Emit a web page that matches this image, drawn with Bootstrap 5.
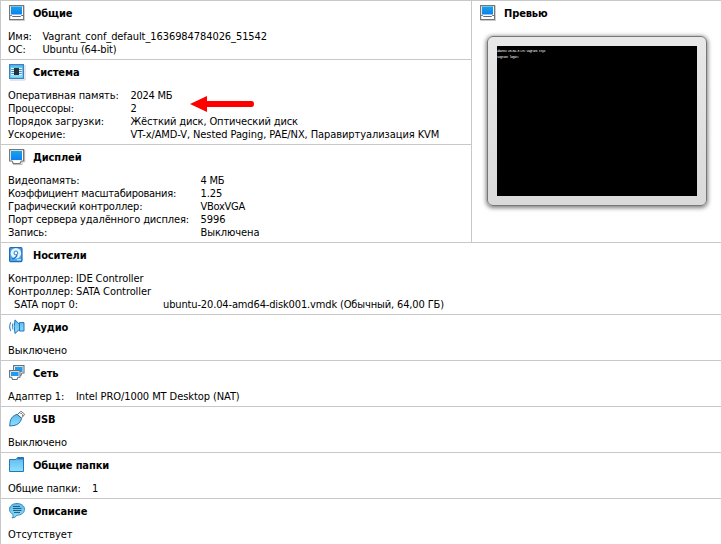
<!DOCTYPE html>
<html lang="ru">
<head>
<meta charset="utf-8">
<title>Сведения о машине</title>
<link href="https://cdn.jsdelivr.net/npm/bootstrap@5.3.0/dist/css/bootstrap.min.css" rel="stylesheet">
<style>
body{font:11px/13px "DejaVu Sans Condensed",Tahoma,sans-serif;letter-spacing:-.08px;color:#000;background:#fff;overflow:hidden}
.page{width:721px;height:544px;border-left:1px solid #c8c8c8}
.sect{border-top:1px solid #c8c8c8;padding:0 0 3px 7px}
.sect-head{height:29px;padding:4px 0 0 1px;gap:8px}
.sect-head h2{font-size:11px;line-height:18px;font-weight:700;letter-spacing:-.12px;margin:0}
.sect-head svg{width:16px;height:16px;flex:none;overflow:visible}
.line{white-space:pre;height:13px}
.k-gen{width:34.5px}.k-sys{width:122.5px}.k-disp{width:192.5px}.k-ctl{width:68px}.k-port{width:155px}.k-fold{width:84px}
.t1{letter-spacing:-.14px}.t2{letter-spacing:-.26px}
.main-col{width:470px}
.preview{border-left:1px solid #c8c8c8;border-top:1px solid #c8c8c8;padding-left:7px}
.preview .sect-head{padding-left:1px}
.bezel{width:220px;height:170px;margin:6px 0 0 8px;padding:9px;border:1px solid #777;border-radius:6px;background:linear-gradient(#e8e8e8,#dadada);box-shadow:0 1px 4px 1px rgba(0,0,0,.5)}
.screen{width:200px;height:150px;background:#000;color:#eee;font:3.5px/6px "Liberation Mono",monospace;letter-spacing:-.55px;padding-top:2px;white-space:pre}
.arrow{left:188px;top:95px;width:66px;height:18px}
</style>
<script src="https://cdn.jsdelivr.net/npm/bootstrap@5.3.0/dist/js/bootstrap.bundle.min.js"></script>
</head>
<body>
<svg width="0" height="0" class="position-absolute" aria-hidden="true">
<defs>
<linearGradient id="scr" x2="0" y2="1"><stop stop-color="#18a4e8"/><stop offset="1" stop-color="#0b80f5"/></linearGradient>
<linearGradient id="sky" x2="0" y2="1"><stop stop-color="#5eb8ee"/><stop offset="1" stop-color="#8ce2ff"/></linearGradient>
<symbol id="machine" viewBox="0 0 16 16"><path d="M1 16H16V1" fill="none" stroke="#ccc"/><path d="M.6.6H14.6V14.6H.6Z" fill="#fff" stroke="#747678" stroke-width="1.2"/><path d="M2 1.5H13V9.5H2Z" fill="url(#scr)"/><path d="M1.2 10.5H2.5L3.5 11.5H11.5L12.5 10.5H14" fill="none" stroke="#686868"/></symbol>
</defs>
</svg>
<div class="page position-relative">
<div class="d-flex">
<div class="main-col">
<section class="sect">
<div class="sect-head d-flex"><svg><use href="#machine"/></svg><h2>Общие</h2></div>
<div class="line d-flex"><span class="k-gen">Имя:</span><span>Vagrant_conf_default_1636984784026_51542</span></div>
<div class="line d-flex"><span class="k-gen">ОС:</span><span class="t1">Ubuntu (64-bit)</span></div>
</section>
<section class="sect">
<div class="sect-head d-flex"><svg viewBox="0 0 16 16"><path d="M1 16H16V1" fill="none" stroke="#ccd"/><path d="M.6.6H14.4V14.4H.6Z" fill="url(#sky)" stroke="#3a84bd" stroke-width="1.2"/><path d="M2 4.5H13M2 6.5H13M2 8.5H13M2 10.5H13" stroke="#e6f7ff"/><path d="M2.5 5.5H12.5M2.5 7.5H12.5M2.5 9.5H12.5" stroke="#3f6f96" stroke-width=".7"/><path d="M5 4H10V11H5Z" fill="#26313e"/></svg><h2>Система</h2></div>
<div class="line d-flex"><span class="k-sys t1">Оперативная память:</span><span class="t2">2024 МБ</span></div>
<div class="line d-flex"><span class="k-sys">Процессоры:</span><span>2</span></div>
<div class="line d-flex"><span class="k-sys">Порядок загрузки:</span><span class="t1">Жёсткий диск, Оптический диск</span></div>
<div class="line d-flex"><span class="k-sys">Ускорение:</span><span>VT-x/AMD-V, Nested Paging, PAE/NX, Паравиртуализация KVM</span></div>
</section>
<section class="sect">
<div class="sect-head d-flex"><svg viewBox="0 0 16 16"><path d="M15.7 1V12.8H13V15.6H4" fill="none" stroke="#bbb"/><path d="M.6.6H14.6V12H12.2L11 14.5H4.2L3 12H.6Z" fill="#fff" stroke="#747678" stroke-width="1.2"/><path d="M2 2H13V11H2Z" fill="url(#scr)"/></svg><h2>Дисплей</h2></div>
<div class="line d-flex"><span class="k-disp t1">Видеопамять:</span><span class="t2">4 МБ</span></div>
<div class="line d-flex"><span class="k-disp t2">Коэффициент масштабирования:</span><span>1.25</span></div>
<div class="line d-flex"><span class="k-disp t1">Графический контроллер:</span><span class="t2">VBoxVGA</span></div>
<div class="line d-flex"><span class="k-disp t1">Порт сервера удалённого дисплея:</span><span>5996</span></div>
<div class="line d-flex"><span class="k-disp">Запись:</span><span>Выключена</span></div>
</section>
</div>
<aside class="preview flex-grow-1">
<div class="sect-head d-flex"><svg><use href="#machine"/></svg><h2>Превью</h2></div>
<div class="bezel"><div class="screen">Ubuntu 20.04.3 LTS vagrant tty1
vagrant login:</div></div>
</aside>
</div>
<section class="sect">
<div class="sect-head d-flex"><svg viewBox="0 0 16 16"><path d="M1.5.6H12Q13 .6 13 2V13.5Q13 14.6 12 14.6H1.5Q.6 14.6.6 13.5V2Q.6.6 1.5.6Z" fill="#4aa8ee" stroke="#2369b5" stroke-width="1.2"/><circle cx="6.9" cy="6.3" r="5.2" fill="#e2f5ff"/><circle cx="6.9" cy="6" r="1.9" fill="#fff" stroke="#2a7cc6"/><path d="M8 7.8C7.5 10 5 11.5 3 11.8" fill="none" stroke="#2171bb" stroke-width="1.2"/><path d="M8 12.8H12" stroke="#d9f2ff"/></svg><h2>Носители</h2></div>
<div class="line d-flex"><span class="k-ctl">Контроллер:</span><span>IDE Controller</span></div>
<div class="line d-flex"><span class="k-ctl">Контроллер:</span><span>SATA Controller</span></div>
<div class="line d-flex"><span class="k-port">  SATA порт 0:</span><span class="t1">ubuntu-20.04-amd64-disk001.vmdk (Обычный, 64,00 ГБ)</span></div>
</section>
<section class="sect">
<div class="sect-head d-flex"><svg viewBox="0 0 16 16"><path d="M1.8 3.2Q-.4 7.5 1.8 12M4 4.5Q2.5 7.5 4 10.5" fill="none" stroke="#2d86c8" stroke-width="1.1"/><path d="M10.5 5.3L6 .9Q4.4 7.5 6 14.5L10.5 10.3V12H15V3.6H10.5Z" fill="url(#sky)" stroke="#2676b4"/><path d="M10.5 5V11" stroke="#2676b4"/></svg><h2>Аудио</h2></div>
<div class="line">Выключено</div>
</section>
<section class="sect">
<div class="sect-head d-flex"><svg viewBox="0 0 16 16"><path d="M4.6.6H15V8H13L12 10.2H7L6 8H4.6Z" fill="#fff" stroke="#66717b" stroke-width="1.1"/><path d="M6 2H13.6V7H6Z" fill="#1d9ded"/><path d="M.6 5.6H11V12.2H9L8 14.5H3.5L2.6 12.2H.6Z" fill="#fff" stroke="#66717b" stroke-width="1.1"/><path d="M2 7H9.6V11H2Z" fill="#1d9ded"/></svg><h2>Сеть</h2></div>
<div class="line d-flex"><span class="k-ctl">Адаптер 1:</span><span>Intel PRO/1000 MT Desktop (NAT)</span></div>
</section>
<section class="sect">
<div class="sect-head d-flex"><svg viewBox="0 0 16 16"><path d="M8.5 3.5L11.3.8Q12.2.2 13 .8L15 2.8Q15.7 3.6 15 4.4L12.3 7Z" fill="#fff" stroke="#666"/><path d="M11.5 2.5H12.7M13 4.2H14" stroke="#555" stroke-width="1.2"/><path d="M.7 15L1.2 10.5Q2 5.5 8 3.2L12.6 7.5Q11 13.5 5 14.5Z" fill="url(#sky)" stroke="#2874a8"/></svg><h2>USB</h2></div>
<div class="line">Выключено</div>
</section>
<section class="sect">
<div class="sect-head d-flex"><svg viewBox="0 0 16 16"><path d="M.5 2.5H7L8.5.5H14.5V14.5H.5Z" fill="url(#sky)" stroke="#2875b8"/><path d="M8 2.5L9 .5H14.5V2.5Z" fill="#2875b8"/></svg><h2>Общие папки</h2></div>
<div class="line d-flex"><span class="k-fold">Общие папки:</span><span>1</span></div>
</section>
<section class="sect">
<div class="sect-head d-flex"><svg viewBox="0 0 16 16"><path d="M8 .5C12.3.5 15.5 2.8 15.5 6.3S12.3 12.2 8 12.2Q6.5 14.7 3 15Q4.5 13.5 4.1 11.4C1.8 10.3.5 8.5.5 6.3.5 2.8 3.7.5 8 .5Z" fill="url(#sky)" stroke="#3d8ab8"/><path d="M4 3.5H11M4 5.5H12.5M4 7.5H12.5M5 9.5H11" stroke="#17445e" stroke-width=".8"/></svg><h2>Описание</h2></div>
<div class="line">Отсутствует</div>
</section>
<svg class="arrow position-absolute" viewBox="0 0 66 18"><path d="M1 9L18 1V6H62.5Q65 6 65 9T62.5 12H18V17Z" fill="#f00"/></svg>
</div>
</body>
</html>
